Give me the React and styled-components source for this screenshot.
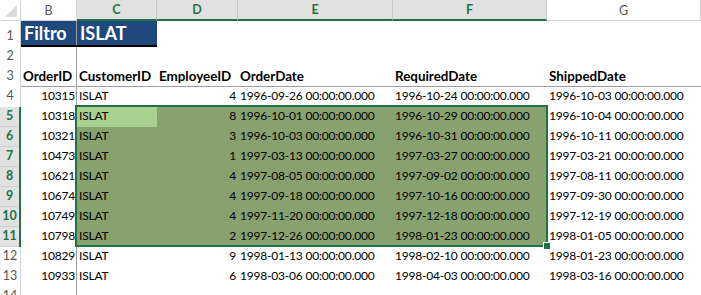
import React from "react";
import styled, { createGlobalStyle } from "styled-components";

const GREEN = "#217346";
const LINE = "#9e9e9e";
const HEAD_LINE = "#d4d4d4";
const FONT = `"Lato", "Open Sans", "Liberation Sans", sans-serif`;

const Global = createGlobalStyle`
  html, body { margin: 0; padding: 0; background: #fff; overflow: hidden; }
  body { font-family: ${FONT}; }
`;

const Sheet = styled.div`
  position: relative;
  display: grid;
  grid-template-columns: 21px 56px 80px 81px 155px 154px 154px;
  grid-template-rows: 21px 26px repeat(13, 20px);
  width: 701px;
  height: 295px;
  overflow: hidden;
  font-family: ${FONT};
  color: #000;
`;

const Corner = styled.div`
  position: relative;
  box-sizing: border-box;
  border-right: 1px solid ${HEAD_LINE};
  border-bottom: 1px solid ${HEAD_LINE};
  &::after {
    content: "";
    position: absolute;
    right: 3px;
    bottom: 3px;
    width: 0;
    height: 0;
    border-style: solid;
    border-width: 0 0 12px 12px;
    border-color: transparent transparent #dadada transparent;
  }
`;

const ColHeader = styled.div`
  box-sizing: border-box;
  display: flex;
  align-items: center;
  justify-content: center;
  font-size: 12.5px;
  background: ${(p) => (p.$active ? "#e1e1e1" : "#fff")};
  color: ${(p) => (p.$active ? GREEN : "#555")};
  font-weight: ${(p) => (p.$active ? 700 : 400)};
  border-right: 1px solid ${(p) => (p.$active ? "#c6c6c6" : HEAD_LINE)};
  border-bottom: ${(p) => (p.$active ? `2px solid ${GREEN}` : `1px solid ${HEAD_LINE}`)};
`;

const RowHeader = styled.div`
  box-sizing: border-box;
  display: flex;
  align-items: flex-end;
  justify-content: center;
  padding-bottom: 3px;
  font-size: 12.5px;
  line-height: 16px;
  background: ${(p) => (p.$active ? "#e1e1e1" : "#fff")};
  color: ${(p) => (p.$active ? GREEN : "#555")};
  font-weight: ${(p) => (p.$active ? 700 : 400)};
  border-right: ${(p) => (p.$active ? `2px solid ${GREEN}` : `1px solid ${HEAD_LINE}`)};
  box-shadow: ${(p) => (p.$active ? "inset 0 -1px 0 #cfcfcf" : "none")};
`;

const shadows = (p) => {
  const s = [];
  if (p.$rightLine) s.push(`inset -1px 0 0 ${LINE}`);
  if (p.$underLine) s.push(`inset 0 -1px 0 ${LINE}`);
  return s.length ? s.join(", ") : "none";
};

const Cell = styled.div`
  box-sizing: border-box;
  display: flex;
  align-items: flex-end;
  justify-content: ${(p) => (p.$right ? "flex-end" : "flex-start")};
  padding: 0 2px 3px 2px;
  font-size: ${(p) => (p.$bold ? "13.4px" : "12px")};
  letter-spacing: ${(p) => (p.$bold ? "0" : "-0.2px")};
  line-height: 16px;
  white-space: nowrap;
  font-weight: ${(p) => (p.$bold ? 700 : 400)};
  background: ${(p) => p.$fill || "transparent"};
  box-shadow: ${shadows};
`;

const TitleCell = styled.div`
  box-sizing: border-box;
  display: flex;
  align-items: center;
  padding: 0 3px;
  background: #1f497d;
  color: #fff;
  font-size: 18px;
  font-weight: 700;
  line-height: 20px;
  border-bottom: 2px solid #000;
  box-shadow: ${(p) => (p.$rightLine ? `inset -1px 0 0 ${LINE}` : "none")};
`;

const Selection = styled.div`
  position: absolute;
  left: 75px;
  top: 105px;
  width: 473px;
  height: 142px;
  box-sizing: border-box;
  border: 2px solid ${GREEN};
  pointer-events: none;
`;

const FillHandle = styled.div`
  position: absolute;
  left: 543px;
  top: 242px;
  width: 6px;
  height: 6px;
  background: ${GREEN};
  border: 1px solid #fff;
`;

const COLS = ["B", "C", "D", "E", "F", "G"];
const ACTIVE_COLS = ["C", "D", "E", "F"];
const T = " 00:00:00.000";

const rows = [
  [4, "10315", "4", "1996-09-26", "1996-10-24", "1996-10-03"],
  [5, "10318", "8", "1996-10-01", "1996-10-29", "1996-10-04"],
  [6, "10321", "3", "1996-10-03", "1996-10-31", "1996-10-11"],
  [7, "10473", "1", "1997-03-13", "1997-03-27", "1997-03-21"],
  [8, "10621", "4", "1997-08-05", "1997-09-02", "1997-08-11"],
  [9, "10674", "4", "1997-09-18", "1997-10-16", "1997-09-30"],
  [10, "10749", "4", "1997-11-20", "1997-12-18", "1997-12-19"],
  [11, "10798", "2", "1997-12-26", "1998-01-23", "1998-01-05"],
  [12, "10829", "9", "1998-01-13", "1998-02-10", "1998-01-23"],
  [13, "10933", "6", "1998-03-06", "1998-04-03", "1998-03-16"],
];

const SEL = "#87a26f";
const ACTIVE = "#a9d08e";

export default function App() {
  return (
    <>
      <Global />
      <Sheet>
        <Corner />
        {COLS.map((c) => (
          <ColHeader key={c} $active={ACTIVE_COLS.includes(c)}>
            {c}
          </ColHeader>
        ))}

        <RowHeader>1</RowHeader>
        <TitleCell $rightLine>Filtro</TitleCell>
        <TitleCell>ISLAT</TitleCell>
        <Cell />
        <Cell />
        <Cell />
        <Cell />

        <RowHeader>2</RowHeader>
        <Cell $rightLine />
        <Cell />
        <Cell />
        <Cell />
        <Cell />
        <Cell />

        <RowHeader>3</RowHeader>
        <Cell $bold $rightLine $underLine>OrderID</Cell>
        <Cell $bold $underLine>CustomerID</Cell>
        <Cell $bold $underLine>EmployeeID</Cell>
        <Cell $bold $underLine>OrderDate</Cell>
        <Cell $bold $underLine>RequiredDate</Cell>
        <Cell $bold $underLine>ShippedDate</Cell>

        {rows.map(([n, id, emp, od, rd, sd]) => {
          const sel = n >= 5 && n <= 11;
          const fill = sel ? SEL : undefined;
          return (
            <React.Fragment key={n}>
              <RowHeader $active={sel}>{n}</RowHeader>
              <Cell $right $rightLine>{id}</Cell>
              <Cell $fill={n === 5 ? ACTIVE : fill}>ISLAT</Cell>
              <Cell $right $fill={fill}>{emp}</Cell>
              <Cell $fill={fill}>{od + T}</Cell>
              <Cell $fill={fill}>{rd + T}</Cell>
              <Cell>{sd + T}</Cell>
            </React.Fragment>
          );
        })}

        <RowHeader>14</RowHeader>
        <Cell $rightLine />
        <Cell />
        <Cell />
        <Cell />
        <Cell />
        <Cell />

        <Selection />
        <FillHandle />
      </Sheet>
    </>
  );
}
